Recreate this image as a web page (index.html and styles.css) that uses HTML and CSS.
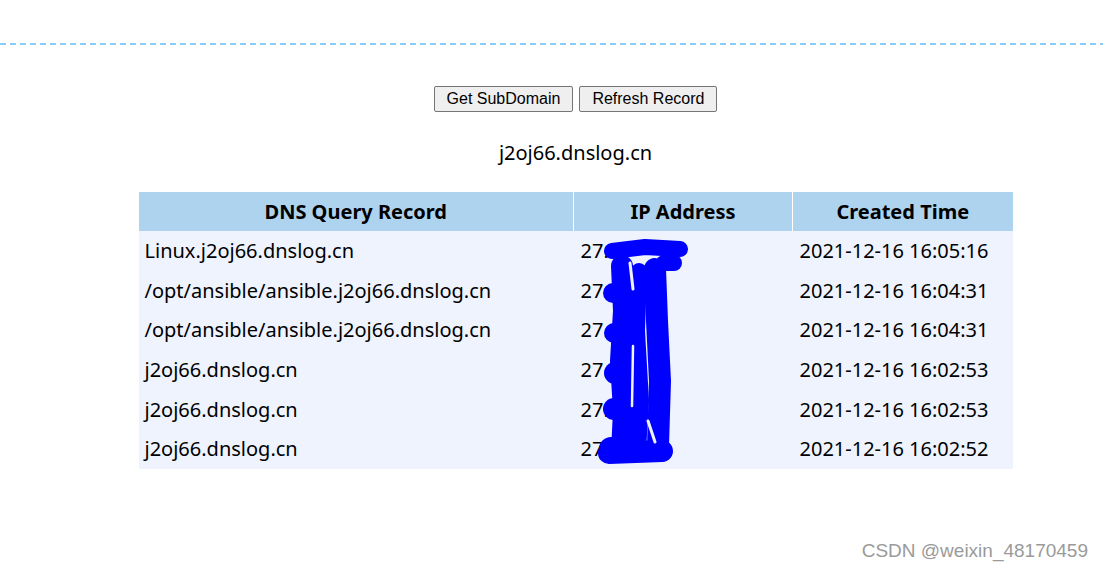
FILE: index.html
```html
<!DOCTYPE html>
<html>
<head>
<meta charset="utf-8">
<link rel="stylesheet" href="styles.css">
</head>
<body>
<div class="rule"></div>
<main class="main">
  <div class="actions">
    <button class="btn">Get SubDomain</button>
    <button class="btn">Refresh Record</button>
  </div>
  <p class="domain">j2oj66.dnslog.cn</p>
  <div class="table-wrap">
    <table class="records">
      <colgroup><col class="c1"><col class="c2"><col class="c3"></colgroup>
      <thead>
        <tr><th>DNS Query Record</th><th>IP Address</th><th>Created Time</th></tr>
      </thead>
      <tbody>
        <tr><td>Linux.j2oj66.dnslog.cn</td><td>27.</td><td>2021-12-16 16:05:16</td></tr>
        <tr><td>/opt/ansible/ansible.j2oj66.dnslog.cn</td><td>27.</td><td>2021-12-16 16:04:31</td></tr>
        <tr><td>/opt/ansible/ansible.j2oj66.dnslog.cn</td><td>27.</td><td>2021-12-16 16:04:31</td></tr>
        <tr><td>j2oj66.dnslog.cn</td><td>27.</td><td>2021-12-16 16:02:53</td></tr>
        <tr><td>j2oj66.dnslog.cn</td><td>27.</td><td>2021-12-16 16:02:53</td></tr>
        <tr><td>j2oj66.dnslog.cn</td><td>27.</td><td>2021-12-16 16:02:52</td></tr>
      </tbody>
    </table>
  </div>
</main>
<svg class="scribble" width="1103" height="569" viewBox="0 0 1103 569">
  <g fill="#0000ff">
    <circle cx="613" cy="293" r="10"/>
    <circle cx="614" cy="333" r="10"/>
    <circle cx="615" cy="373" r="11"/>
    <circle cx="614" cy="409" r="11"/>
    <circle cx="611" cy="449" r="12"/>
  </g>
  <g fill="none" stroke="#0000ff" stroke-linecap="round" stroke-linejoin="round">
    <path d="M612 251 L645 247 L680 249" stroke-width="16"/>
    <path d="M622 266 L624 311 L621 361 L624 411 L622 451" stroke-width="22"/>
    <path d="M655 269 L657 321 L660 381 L658 446" stroke-width="22"/>
    <path d="M639 271 L637 331 L641 401 L638 451" stroke-width="16"/>
    <path d="M664 263 L674 263" stroke-width="16"/>
    <path d="M609 453 L662 451" stroke-width="22"/>
  </g>
  <g fill="none" stroke="#eef3fe" stroke-linecap="round">
    <path d="M630 263 L633 289" stroke-width="3"/>
    <path d="M633 346 L632 406" stroke-width="2.5"/>
    <path d="M648 421 L655 442" stroke-width="3"/>
  </g>
</svg>
<div class="watermark">CSDN @weixin_48170459</div>
</body>
</html>
```

FILE: styles.css
```css
html, body {
  margin: 0;
  padding: 0;
  background: #ffffff;
}
body {
  position: relative;
  width: 1103px;
  height: 569px;
  overflow: hidden;
  font-family: "Noto Sans", "Open Sans", sans-serif;
  color: #000;
}
.rule {
  margin-top: 43px;
  height: 2px;
  background: repeating-linear-gradient(to right, #87cefa 0 6px, transparent 6px 10px);
}
.main {
  padding-left: 48px;
  display: flex;
  flex-direction: column;
  align-items: center;
}
.actions {
  margin-top: 41px;
  display: flex;
  gap: 6px;
}
.btn {
  font-family: "Liberation Sans", Arial, sans-serif;
  font-size: 16px;
  height: 26px;
  padding: 0 12px;
  border: 1px solid #767676;
  border-radius: 2px;
  background: #efefef;
  color: #000;
}
.domain {
  margin: 0;
  margin-top: 27px;
  font-size: 20px;
  line-height: 27px;
}
.table-wrap {
  margin-top: 26px;
}
.records {
  border-collapse: collapse;
  table-layout: fixed;
  width: 874px;
  font-size: 20px;
}
.c1 { width: 435px; }
.c2 { width: 219px; }
.c3 { width: 220px; }
.records th {
  background: #aed3ee;
  font-weight: bold;
  text-align: center;
  height: 39px;
  padding: 0 6px;
}
.records th + th {
  border-left: 1px solid #ffffff;
}
.records td {
  background: #eef3fe;
  height: 39.6px;
  padding: 0 6px 0 7px;
  text-align: left;
  white-space: nowrap;
}
.records td:first-child {
  padding-left: 6px;
}
.scribble {
  position: absolute;
  left: 0;
  top: 0;
  pointer-events: none;
}
.watermark {
  position: absolute;
  right: 15px;
  top: 540px;
  font-family: "Liberation Sans", Arial, sans-serif;
  font-size: 19px;
  color: #9a9a9a;
}
```
